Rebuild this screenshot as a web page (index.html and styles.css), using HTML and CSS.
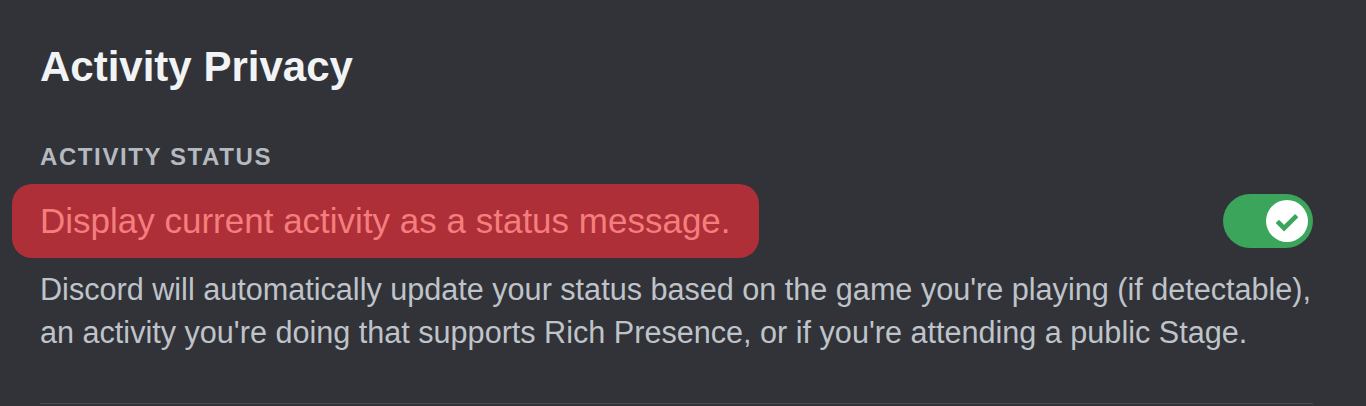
FILE: index.html
```html
<!DOCTYPE html>
<html lang="en">
<head>
    <meta charset="UTF-8">
    <meta name="viewport" content="width=device-width, initial-scale=1.0">
    <title>Activity Privacy</title>
    <link rel="stylesheet" href="styles.css">
</head>
<body>
    <div class="settings">
        <h2>Activity Privacy</h2>
        <h5 class="eyebrow">Activity Status</h5>
        <div class="option">
            <div class="option-row">
                <span class="option-title">Display current activity as a status message.</span>
                <div class="switch">
                    <div class="knob">
                        <svg viewBox="0 0 20 20">
                            <polyline points="4.6,10.2 8.4,14 15.4,7" />
                        </svg>
                    </div>
                </div>
            </div>
            <p class="option-note">Discord will automatically update your status based on the game you're playing (if detectable),<br>an activity you're doing that supports Rich Presence, or if you're attending a public Stage.</p>
        </div>
    </div>
</body>
</html>
```

FILE: styles.css
```css
* {
    margin: 0;
    padding: 0;
    box-sizing: border-box;
}
body {
    background-color: #313338;
    font-family: "Liberation Sans", Arial, sans-serif;
    height: 406px;
    overflow: hidden;
}
.settings {
    padding: 40px 53px 0 40px;
}
.settings h2 {
    font-size: 42px;
    line-height: 54px;
    font-weight: 700;
    color: #f2f3f5;
    margin-bottom: 48px;
}
.eyebrow {
    font-size: 24px;
    line-height: 30px;
    font-weight: 700;
    letter-spacing: 1.6px;
    text-transform: uppercase;
    color: #b5bac1;
    margin-bottom: 12px;
}
.option {
    border-bottom: 1px solid #4a4c53;
    padding-bottom: 49px;
}
.option-row {
    display: flex;
    justify-content: space-between;
    align-items: center;
}
.option-title {
    display: inline-block;
    margin-left: -28px;
    padding: 0 28px;
    height: 74px;
    line-height: 74px;
    border-radius: 20px;
    background-color: #ae2f37;
    color: #f47e7e;
    font-size: 35px;
}
.switch {
    width: 90px;
    height: 54px;
    border-radius: 27px;
    background-color: #3ba55c;
    display: flex;
    align-items: center;
    justify-content: flex-end;
    padding-right: 5px;
}
.knob {
    width: 42px;
    height: 42px;
    border-radius: 50%;
    background-color: #fff;
    display: flex;
    align-items: center;
    justify-content: center;
}
.knob svg {
    width: 36px;
    height: 36px;
    fill: none;
    stroke: #3ba55c;
    stroke-width: 2.6;
}
.option-note {
    margin-top: 10px;
    margin-right: -50px;
    font-size: 30.6px;
    line-height: 43px;
    color: #bfc3ca;
}
```
